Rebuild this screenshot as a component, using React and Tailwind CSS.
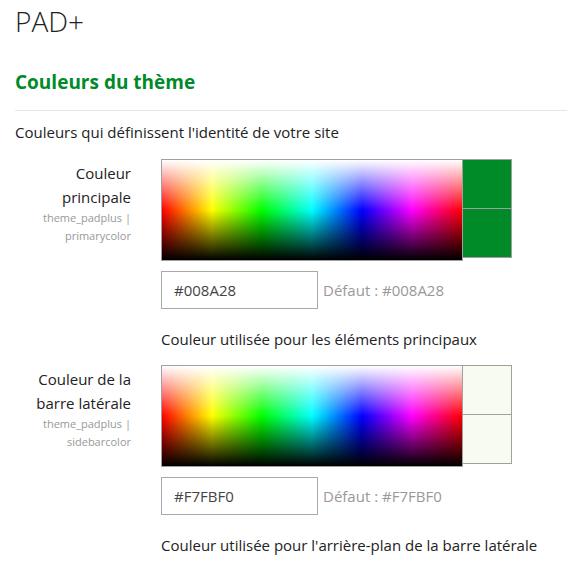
import React from 'react';

const colors = [
    {
        label: ['Couleur', 'principale'],
        key: ['theme_padplus |', 'primarycolor'],
        value: '#008A28',
        swatch: 'bg-[#008a28]',
        help: 'Couleur utilisée pour les éléments principaux',
    },
    {
        label: ['Couleur de la', 'barre latérale'],
        key: ['theme_padplus |', 'sidebarcolor'],
        value: '#F7FBF0',
        swatch: 'bg-[#f7fbf0]',
        help: "Couleur utilisée pour l'arrière-plan de la barre latérale",
    },
];

const ColorRow = ({ item }) => (
    <div className="flex gap-[30px]">
        <div className="w-[116px] shrink-0 pt-[2px] text-right">
            {item.label.map((l) => (
                <div key={l} className="text-[15px] leading-[24px] text-[#222]">{l}</div>
            ))}
            {item.key.map((k) => (
                <div key={k} className="text-[11px] leading-[18px] text-[#999]">{k}</div>
            ))}
        </div>
        <div className="flex flex-col">
            <div className="flex items-start">
                <div className="relative w-[302px] h-[102px] border border-[#a0a0a0] bg-[linear-gradient(to_right,#f00,#ff0,#0f0,#0ff,#00f,#f0f,#f00)]">
                    <div className="absolute inset-0 bg-[linear-gradient(to_bottom,#fff,rgba(255,255,255,0)_50%,rgba(0,0,0,0)_50%,#000)]" />
                </div>
                <div className="flex flex-col w-[49px] h-[99px] border border-l-0 border-[#a0a0a0]">
                    <div className={`flex-1 border-b border-[#a0a0a0] ${item.swatch}`} />
                    <div className={`flex-1 ${item.swatch}`} />
                </div>
            </div>
            <div className="flex items-center gap-[5px] mt-[10px]">
                <div className="w-[157px] h-[38px] border border-[#a9a9a9] px-[12px] flex items-center text-[15px] text-[#444]">
                    {item.value}
                </div>
                <span className="text-[15px] text-[#999]">Défaut : {item.value}</span>
            </div>
            <p className="mt-[18px] text-[15px] leading-[24px] text-[#222]">{item.help}</p>
        </div>
    </div>
);

export default function App() {
    return (
        <div className="min-h-screen bg-white px-[15px] pt-[1px] font-['Open_Sans',sans-serif]">
            <h1 className="text-[28px] leading-[40px] font-light text-[#222]">PAD+</h1>
            <h2 className="mt-[27px] text-[19px] leading-[28px] font-bold text-[#008a28]">Couleurs du thème</h2>
            <hr className="mt-[14px] border-t border-[#e5e5e5] mr-[-1px]" />
            <p className="mt-[9px] text-[15px] leading-[24px] text-[#222]">Couleurs qui définissent l'identité de votre site</p>
            <div className="mt-[15px] flex flex-col gap-[14px]">
                {colors.map((c) => (
                    <ColorRow key={c.value} item={c} />
                ))}
            </div>
        </div>
    );
}
